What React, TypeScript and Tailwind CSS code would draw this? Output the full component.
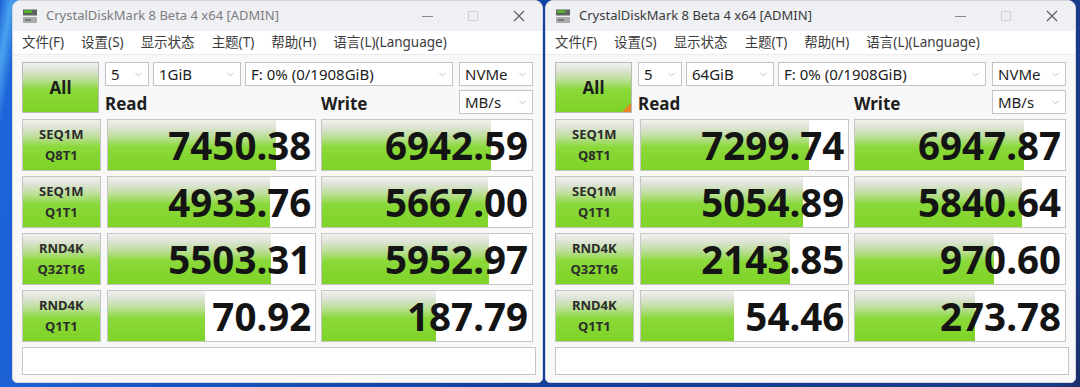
import { ChevronDown } from "lucide-react";

type Row = { name: string; sub: string; read: number; write: number };

const LEFT: Row[] = [
  { name: "SEQ1M", sub: "Q8T1", read: 7450.38, write: 6942.59 },
  { name: "SEQ1M", sub: "Q1T1", read: 4933.76, write: 5667.0 },
  { name: "RND4K", sub: "Q32T16", read: 5503.31, write: 5952.97 },
  { name: "RND4K", sub: "Q1T1", read: 70.92, write: 187.79 },
];

const RIGHT: Row[] = [
  { name: "SEQ1M", sub: "Q8T1", read: 7299.74, write: 6947.87 },
  { name: "SEQ1M", sub: "Q1T1", read: 5054.89, write: 5840.64 },
  { name: "RND4K", sub: "Q32T16", read: 2143.85, write: 970.6 },
  { name: "RND4K", sub: "Q1T1", read: 54.46, write: 273.78 },
];

// CDM meter is log scaled
const meter = (v: number) => Math.min(1, 0.16 + 0.168 * Math.log10(v));

const green =
  "bg-[linear-gradient(to_bottom,#f1f2ee_0%,#dfe4d9_14%,#b8de90_36%,#8ad93a_54%,#7fd326_100%)]";

const AppIcon = () => (
  <svg width="16" height="16" viewBox="0 0 16 16">
    <rect x="1" y="1.5" width="14" height="6" fill="#5f6360" />
    <rect x="2" y="2.5" width="8" height="2.2" fill="#52c41a" />
    <rect x="1" y="9" width="14" height="6" rx="1" fill="#a9acaa" />
    <rect x="3" y="11.2" width="6" height="1.6" fill="#6c6f6d" />
  </svg>
);

const Select = ({ text, w }: { text: string; w: string }) => (
  <div
    className={`${w} h-[24px] flex items-center justify-between bg-white border border-[#c3c3c3] pl-[5px] pr-[4px] text-[15px] text-[#1d1d1d]`}
  >
    <span className="leading-none">{text}</span>
    <ChevronDown size={11} strokeWidth={1.4} color="#9a9a9a" />
  </div>
);

const Meter = ({ value }: { value: number }) => (
  <div className="relative h-full flex-1 bg-white border border-[#c6c6c6] overflow-hidden flex items-center justify-end pr-[4px]">
    <div
      className={`absolute left-0 top-0 bottom-0 ${green}`}
      style={{ width: `${meter(value) * 100}%` }}
    />
    <span className="relative text-[38.5px] font-bold text-[#141414] leading-none">
      {value.toFixed(2)}
    </span>
  </div>
);

const Window = ({
  size,
  rows,
  active,
}: {
  size: string;
  rows: Row[];
  active?: boolean;
}) => (
  <div className="w-[531px] h-[383px] flex flex-col bg-[#f8f8f8] rounded-t-[8px] rounded-b-[5px] overflow-hidden border border-[#d3d6dc]">
    {/* title bar */}
    <div className="h-[30px] flex items-center bg-[#eef0f4] pl-[9px]">
      <AppIcon />
      <span
        className={`ml-[8px] text-[13px] ${active ? "text-[#3a3a3a]" : "text-[#7c7c7c]"}`}
      >
        CrystalDiskMark 8 Beta 4 x64 [ADMIN]
      </span>
      <div className="ml-auto flex h-full">
        <div className="w-[46px] flex items-center justify-center">
          <div className="w-[11px] h-[1px] bg-[#8a8a8a]" />
        </div>
        <div className="w-[46px] flex items-center justify-center">
          <div className="w-[10px] h-[10px] border border-[#cfcfcf] rounded-[1px]" />
        </div>
        <div className="w-[46px] flex items-center justify-center">
          <svg width="12" height="12" viewBox="0 0 12 12">
            <path d="M1 1L11 11M11 1L1 11" stroke="#5a5a5a" strokeWidth="1.1" />
          </svg>
        </div>
      </div>
    </div>

    {/* menu */}
    <div className="h-[24px] flex items-center gap-[17px] bg-white pl-[9px] text-[13.5px] text-[#3c3c3c] border-b border-[#ececec]">
      <span>文件(F)</span>
      <span>设置(S)</span>
      <span>显示状态</span>
      <span>主题(T)</span>
      <span>帮助(H)</span>
      <span>语言(L)(Language)</span>
    </div>

    {/* body */}
    <div className="flex flex-col px-[9px] pt-[7px]">
      <div className="flex gap-[6px]">
        <div
          className={`relative w-[79px] h-[51px] ${green} border border-[#b9b9b9] flex items-center justify-center text-[17px] font-bold text-[#1e1e1e]`}
        >
          All
          {active && (
            <svg
              className="absolute right-0 bottom-0"
              width="9"
              height="9"
              viewBox="0 0 9 9"
            >
              <path d="M9 0L9 9L0 9Z" fill="#e9822a" />
            </svg>
          )}
        </div>
        <div className="flex flex-col gap-[4px] w-[429px]">
          <div className="flex">
            <Select text="5" w="w-[44px]" />
            <div className="w-[4px]" />
            <Select text={size} w="w-[88px]" />
            <div className="w-[4px]" />
            <Select text="F: 0% (0/1908GiB)" w="w-[208px]" />
            <div className="w-[6px]" />
            <Select text="NVMe" w="w-[74px]" />
          </div>
          <div className="flex items-center">
            <span className="w-[216px] text-[17px] font-bold text-[#1e1e1e] leading-none pt-[3px]">
              Read
            </span>
            <span className="flex-1 text-[17px] font-bold text-[#1e1e1e] leading-none pt-[3px]">
              Write
            </span>
            <Select text="MB/s" w="w-[74px]" />
          </div>
        </div>
      </div>

      <div className="flex flex-col gap-[5px] mt-[5px]">
        {rows.map((r, i) => (
          <div key={i} className="flex h-[52px]">
            <div
              className={`w-[79px] h-full ${green} border border-[#c3c3c3] flex flex-col items-center justify-center text-[13px] font-bold text-[#2c2c2c] leading-[21px]`}
            >
              <span>{r.name}</span>
              <span>{r.sub}</span>
            </div>
            <div className="w-[6px]" />
            <div className="w-[211px] h-full flex">
              <Meter value={r.read} />
            </div>
            <div className="w-[5px]" />
            <div className="w-[213px] h-full flex">
              <Meter value={r.write} />
            </div>
          </div>
        ))}
      </div>

      <div className="w-[514px] h-[28px] mt-[5px] bg-white border border-[#c6c6c6]" />
    </div>
  </div>
);

export default function App() {
  return (
    <div className="w-[1080px] h-[387px] overflow-hidden font-['Noto_Sans','Noto_Sans_CJK_SC',sans-serif] bg-[linear-gradient(100deg,#1c5fd6_0%,#4aa3ee_1%,#1d64da_2%,#123f9e_50%,#1a3a86_98%,#1b2c66_100%)]">
      <div className="flex pl-[12px] gap-[2px]">
        <Window size="1GiB" rows={LEFT} />
        <Window size="64GiB" rows={RIGHT} active />
      </div>
    </div>
  );
}
